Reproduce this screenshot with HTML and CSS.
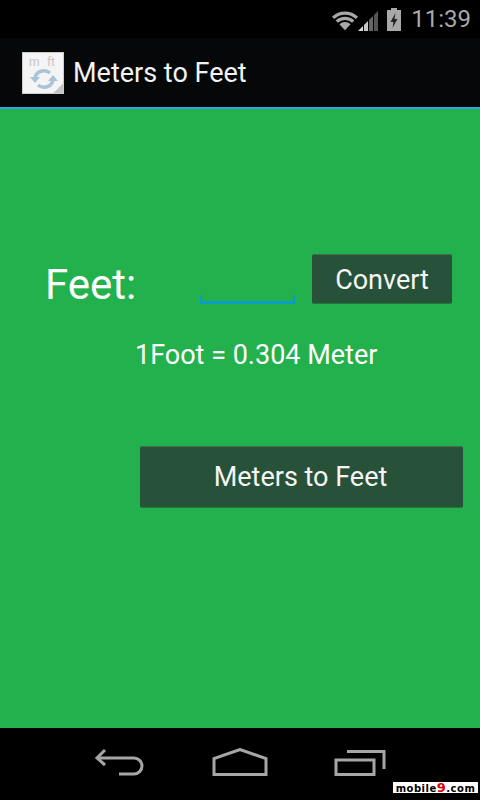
FILE: index.html
```html
<!DOCTYPE html>
<html>
<head>
  <title>Meters to Feet</title>
  <link rel="stylesheet" href="styles.css">
</head>
<body>
  <div class="status-bar">
    <svg class="wifi" width="28" height="22" viewBox="0 0 30 22">
      <path d="M1 7.500 A20 20 0 0 1 29 7.500 L26.500 10 A16.500 16.500 0 0 0 3.500 10 Z" fill="#a8a8a8"/>
      <path d="M5 11.500 A14.500 14.500 0 0 1 25 11.500 L22.600 14 A11 11 0 0 0 7.400 14 Z" fill="#a8a8a8"/>
      <path d="M9 15.500 A9 9 0 0 1 21 15.500 L15 22 Z" fill="#a8a8a8"/>
    </svg>
    <svg class="signal" width="21" height="25" viewBox="0 0 21 25">
      <path d="M0 24 L5 19 V24 Z" fill="#d8d8d8"/>
      <path d="M6 18 L10 14 V24 H6 Z" fill="#c8c8c8"/>
      <path d="M11 13 L15 9 V24 H11 Z" fill="#666"/>
      <path d="M16 8 L20 4 V24 H16 Z" fill="#555"/>
    </svg>
    <svg class="battery" width="16" height="25" viewBox="0 0 16 25">
      <path d="M5 1 H11 V3 H15 V24 H1 V3 H5 Z" fill="#a8a8a8"/>
      <path d="M9.500 6 L4.500 15 H7.500 L6.500 21 L11.500 12 H8.500 Z" fill="#222"/>
    </svg>
    <span class="clock">11:39</span>
  </div>

  <div class="action-bar">
    <div class="app-icon">
      <div class="icon-units"><span>m</span><span>ft</span></div>
      <svg class="icon-sync" width="28" height="22" viewBox="0 0 28 22">
        <path d="M5 10 A9 8.500 0 0 1 20 5" fill="none" stroke="#a9c3d8" stroke-width="3.500"/>
        <path d="M23 12 A9 8.500 0 0 1 8 17" fill="none" stroke="#a9c3d8" stroke-width="3.500"/>
        <path d="M0 9 H10 L5 15 Z" fill="#a9c3d8"/>
        <path d="M18 13 H28 L23 7 Z" fill="#a9c3d8"/>
      </svg>
      <div class="icon-fold"></div>
    </div>
    <span class="app-title">Meters to Feet</span>
  </div>

  <main class="content">
    <div class="convert-row">
      <span class="feet-label">Feet:</span>
      <div class="feet-input"></div>
      <button class="btn btn-convert" type="button">Convert</button>
    </div>
    <p class="ratio">1Foot = 0.304 Meter</p>
    <button class="btn btn-switch" type="button">Meters to Feet</button>
  </main>

  <div class="nav-bar">
    <svg width="52" height="30" viewBox="0 0 52 30">
      <path d="M11 2 L3 10 L11 17" fill="none" stroke="#a6a6a6" stroke-width="3"/>
      <path d="M3 10 H40 A7 7 0 0 1 40 26 H25" fill="none" stroke="#a6a6a6" stroke-width="3"/>
    </svg>
    <svg width="56" height="30" viewBox="0 0 56 30">
      <path d="M2 26.500 V10.500 L28 1.500 L54 10.500 V26.500 Z" fill="none" stroke="#a6a6a6" stroke-width="3"/>
    </svg>
    <svg width="52" height="30" viewBox="0 0 52 30">
      <rect x="2" y="12" width="38" height="14.500" fill="none" stroke="#a6a6a6" stroke-width="3"/>
      <path d="M13 3.500 H50 V21" fill="none" stroke="#a6a6a6" stroke-width="3"/>
    </svg>
    <div class="watermark">mobile<b>9</b>.com</div>
  </div>
</body>
</html>
```

FILE: styles.css
```css
* { box-sizing: border-box; margin: 0; padding: 0; }

html, body {
  width: 480px;
  height: 800px;
  overflow: hidden;
}

body {
  font-family: Roboto, 'Liberation Sans', sans-serif;
  background: #000;
  color: #fff;
  display: flex;
  flex-direction: column;
}

.status-bar {
  height: 38px;
  background: #000;
  display: flex;
  align-items: center;
  padding-right: 9px;
}

.wifi { margin-left: auto; margin-top: 1px; }
.signal { margin-left: -1px; }
.battery { margin-left: 7px; }

.clock {
  margin-left: 9px;
  font-size: 24px;
  color: #a8a8a8;
}

.action-bar {
  height: 71px;
  background: #050708;
  border-bottom: 2px solid #33a5dc;
  display: flex;
  align-items: center;
  padding-left: 22px;
}

.app-icon {
  position: relative;
  width: 42px;
  height: 42px;
  margin-top: 1px;
  background: #f4f4f4;
  overflow: hidden;
  border: 1px solid #ccc;
}

.icon-units {
  display: flex;
  justify-content: space-between;
  padding: 3px 8px 0 6px;
  font-size: 12px;
  line-height: 12px;
  color: #c4c4c4;
}

.icon-sync {
  position: absolute;
  left: 7px;
  top: 15px;
}

.icon-fold {
  position: absolute;
  right: -8px;
  bottom: -8px;
  width: 15px;
  height: 15px;
  background: #c4c4c4;
  transform: rotate(45deg);
}

.app-title {
  margin-left: 9px;
  font-size: 27px;
  color: #f2f2f2;
}

.content {
  height: 619px;
  background: #23b14d;
  padding-top: 145px;
}

.btn {
  display: block;
  font-family: inherit;
  color: #f5f5f5;
  background: #28513a;
  border: none;
  border-top: 1px solid #47694f;
  border-bottom: 1px solid #1f7a3e;
  border-radius: 2px;
}

.convert-row {
  display: flex;
  align-items: flex-start;
  padding-left: 45px;
}

.feet-label {
  width: 155px;
  margin-top: 6px;
  font-size: 42px;
  line-height: 50px;
}

.feet-input {
  width: 95px;
  height: 9px;
  margin-top: 41px;
  border: 2px solid #0d9bc9;
  border-bottom-width: 3px;
  border-top: none;
}

.btn-convert {
  width: 140px;
  height: 50px;
  margin-left: 17px;
  padding-top: 2px;
  font-size: 27px;
}

.ratio {
  margin-top: 26px;
  padding-left: 135px;
  font-size: 27px;
  line-height: 38px;
}

.btn-switch {
  width: 323px;
  height: 62px;
  margin-top: 72px;
  margin-left: 140px;
  padding-right: 2px;
  font-size: 27px;
}

.nav-bar {
  position: relative;
  height: 72px;
  background: #000;
  display: flex;
  align-items: center;
  gap: 66px;
  padding: 0 0 2px 94px;
}

.watermark {
  position: absolute;
  right: 2px;
  bottom: 7px;
  width: 85px;
  height: 11px;
  background: #fff;
  color: #000;
  font-family: 'DejaVu Sans', sans-serif;
  font-weight: 700;
  font-size: 10px;
  line-height: 11px;
  letter-spacing: 0.5px;
  text-align: center;
  white-space: nowrap;
}

.watermark b { color: #e00000; font-size: 13px; }
```
